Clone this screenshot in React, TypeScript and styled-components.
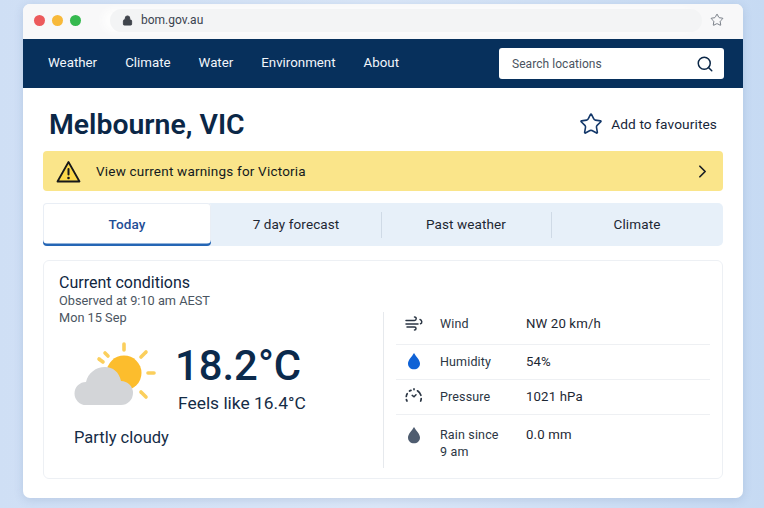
import React from 'react';
import styled, { createGlobalStyle } from 'styled-components';
import { Search, Star, Lock, ChevronRight } from 'lucide-react';

const GlobalStyle = createGlobalStyle`
  html, body {
    margin: 0;
    padding: 0;
    height: 100%;
  }
  body {
    font-family: Roboto, "Liberation Sans", sans-serif;
    background: linear-gradient(90deg, #cfdff5 0%, #dbe7f8 50%, #c6daf3 100%);
    overflow: hidden;
  }
`;

const Stage = styled.div`
  width: 764px;
  height: 508px;
  box-sizing: border-box;
  padding: 4px 21px 10px 23px;
`;

const BrowserWindow = styled.div`
  height: 494px;
  background: #fff;
  border-radius: 7px;
  overflow: hidden;
  display: flex;
  flex-direction: column;
  box-shadow: 0 2px 10px rgba(70, 100, 150, 0.18);
`;

const Chrome = styled.div`
  height: 35px;
  flex: none;
  box-sizing: border-box;
  display: flex;
  align-items: center;
  background: #f8f8f9;
  padding: 0 11px 3px;
`;

const Dot = styled.span<{ $color: string }>`
  width: 11px;
  height: 11px;
  border-radius: 50%;
  background: ${(p) => p.$color};
  margin-right: 7px;
`;

const AddressBar = styled.div`
  margin-left: 22px;
  width: 592px;
  height: 23px;
  flex: none;
  display: flex;
  align-items: center;
  gap: 8px;
  padding-left: 12px;
  box-sizing: border-box;
  background: #f3f4f5;
  border-radius: 12px;
  box-shadow: -8px 0 6px #fdfdfd;
  color: #3b4350;
  font-size: 12px;
`;

const ChromeStar = styled.span`
  margin-left: 8px;
  display: flex;
  color: #5d6570;
`;

const Nav = styled.nav`
  height: 49px;
  flex: none;
  display: flex;
  align-items: center;
  background: #07305c;
  padding: 0 19px 0 25px;
`;

const NavLinks = styled.div`
  display: flex;
  gap: 28px;
  flex: 1;
  margin-bottom: 2px;
`;

const NavLink = styled.a`
  color: #f2f6fb;
  font-size: 13.3px;
`;

const SearchBox = styled.div`
  width: 225px;
  height: 31px;
  box-sizing: border-box;
  background: #fff;
  border-radius: 3px;
  display: flex;
  align-items: center;
  justify-content: space-between;
  padding: 0 10px 0 13px;
  color: #4a5360;
  font-size: 12px;
  letter-spacing: 0.05px;
`;

const Content = styled.main`
  flex: 1;
  display: flex;
  flex-direction: column;
  padding: 0 20px;
`;

const TitleRow = styled.div`
  height: 63px;
  flex: none;
  box-sizing: border-box;
  display: flex;
  align-items: center;
  justify-content: space-between;
  padding: 10px 6px 0;
`;

const Title = styled.h1`
  margin: 0;
  font-size: 28.4px;
  font-weight: 600;
  color: #0b2747;
`;

const Favourite = styled.div`
  display: flex;
  align-items: center;
  gap: 8px;
  margin-bottom: 1px;
  color: #17263a;
  font-size: 13.7px;
  letter-spacing: 0.1px;
`;

const WarningBar = styled.div`
  height: 40px;
  flex: none;
  box-sizing: border-box;
  display: flex;
  align-items: center;
  background: #fae58a;
  border-radius: 4px;
  padding: 0 10px 0 13px;
  color: #141a20;
  font-size: 13.5px;
  letter-spacing: 0.2px;
`;

const WarningText = styled.span`
  flex: 1;
  margin-left: 15px;
`;

const Tabs = styled.div`
  margin-top: 12px;
  height: 43px;
  flex: none;
  display: grid;
  grid-template-columns: 168px 170px 170px 1fr;
  background: #e7f0f9;
  border-radius: 5px;
`;

const Tab = styled.div<{ $active?: boolean }>`
  position: relative;
  display: flex;
  align-items: center;
  justify-content: center;
  padding-bottom: 2px;
  box-sizing: border-box;
  font-size: 13.5px;
  letter-spacing: 0.1px;
  color: ${(p) => (p.$active ? '#1f4e96' : '#1d2733')};
  font-weight: ${(p) => (p.$active ? 500 : 400)};
  background: ${(p) => (p.$active ? '#fff' : 'transparent')};
  border-radius: ${(p) => (p.$active ? '4px' : '0')};
  box-shadow: ${(p) => (p.$active ? 'inset 0 -2.5px 0 #2566b5, inset 0 0 0 1px #e9eef5' : 'none')};
`;

const TabDivider = styled.span`
  position: absolute;
  right: -1px;
  top: 9px;
  bottom: 8px;
  width: 1px;
  background: #cfdae6;
`;

const Card = styled.section`
  margin-top: 14px;
  height: 219px;
  flex: none;
  box-sizing: border-box;
  display: grid;
  grid-template-columns: 324px 1fr;
  border: 1px solid #edf0f4;
  border-radius: 6px;
  padding: 13px 12px 10px 15px;
`;

const LeftPane = styled.div`
  display: flex;
  flex-direction: column;
`;

const CardTitle = styled.h2`
  margin: 0;
  font-size: 16px;
  font-weight: 400;
  line-height: 18px;
  color: #10263f;
`;

const Observed = styled.div`
  margin-top: 1px;
  color: #4b5561;
  font-size: 12.75px;
  line-height: 16.5px;
`;

const Reading = styled.div`
  margin-top: 14px;
  display: flex;
  align-items: flex-start;
  padding-left: 15px;
`;

const WeatherIcon = styled.svg`
  width: 84px;
  height: 66px;
  flex: none;
`;

const Temps = styled.div`
  margin-left: 17px;
  display: flex;
  flex-direction: column;
`;

const Temperature = styled.div`
  font-size: 41.8px;
  font-weight: 500;
  line-height: 52px;
  color: #0b2a4c;
`;

const FeelsLike = styled.div`
  margin-top: 1px;
  margin-left: 3px;
  font-size: 17.4px;
  line-height: 20px;
  color: #152c46;
`;

const Condition = styled.div`
  margin-top: 15px;
  margin-left: 15px;
  font-size: 16.5px;
  line-height: 20px;
  color: #152c46;
`;

const RightPane = styled.div`
  margin-top: 38px;
  border-left: 1px solid #e6e9ed;
  padding-left: 12px;
  display: flex;
  flex-direction: column;
`;

const Stat = styled.div<{ $height: number; $top?: number; $bottom?: number; $last?: boolean }>`
  height: ${(p) => p.$height}px;
  flex: none;
  display: grid;
  grid-template-columns: 44px 86px 1fr;
  align-items: ${(p) => (p.$last ? 'start' : 'center')};
  padding: ${(p) => p.$top ?? 0}px 0 ${(p) => p.$bottom ?? 0}px;
  box-sizing: border-box;
  border-bottom: ${(p) => (p.$last ? 'none' : '1px solid #eef0f3')};
  font-size: 12.5px;
  line-height: 17px;
  letter-spacing: 0.15px;
  color: #2b3644;
`;

const StatIcon = styled.span`
  display: flex;
  padding-left: 9px;
`;

const StatValue = styled.span`
  font-size: 13.2px;
  color: #1d2733;
`;

const WarningIcon = () => (
  <svg width="25" height="23" viewBox="0 0 25 23">
    <path d="M12.5 2 L23.5 21.5 H1.5 Z" fill="#fbd84a" stroke="#17181a" strokeWidth="1.8" strokeLinejoin="round" />
    <rect x="11.5" y="8" width="2" height="7.5" rx="1" fill="#17181a" />
    <circle cx="12.5" cy="18" r="1.3" fill="#17181a" />
  </svg>
);

const SunCloud = () => (
  <WeatherIcon viewBox="0 0 84 66">
    <g stroke="#fbcf5c" strokeWidth="3.6" strokeLinecap="round" fill="none">
      <line x1="50" y1="4" x2="50" y2="10" />
      <line x1="72" y1="12" x2="67" y2="17" />
      <line x1="80" y1="33" x2="74" y2="33" />
      <line x1="72" y1="57" x2="67" y2="52" />
      <line x1="31" y1="13" x2="34" y2="16" />
      <line x1="25" y1="19" x2="29" y2="22" />
    </g>
    <circle cx="50" cy="33" r="17.5" fill="#fcbd2d" />
    <path
      d="M12 65 A11.500 11.500 0 0 1 12 42 C14 33 22 27 31 27 C39 27 45 32 47 41 A12 12 0 0 1 47 65 Z"
      fill="#d3d5d8"
    />
  </WeatherIcon>
);

const WindIcon = () => (
  <svg width="18" height="16" viewBox="0 0 18 16" fill="none" stroke="#2b3644" strokeWidth="1.5" strokeLinecap="round">
    <path d="M1 5.500 H9.500 C11.500 5.500 12 2 9.500 2" />
    <path d="M1 9 H13" />
    <path d="M15 4.500 C17 5 17.500 8 15.500 8.800" />
    <path d="M2 12 H9.500 C11.500 12 11.500 15 9.500 15" />
  </svg>
);

const Drop = ({ color }: { color: string }) => (
  <svg width="14" height="18" viewBox="0 0 14 18" style={{ marginLeft: 2 }}>
    <path d="M7 1 C9 4.500 13 8 13 11.500 C13 15 10.300 17.300 7 17.300 C3.700 17.300 1 15 1 11.500 C1 8 5 4.500 7 1 Z" fill={color} />
  </svg>
);

const PressureIcon = () => (
  <svg width="18" height="16" viewBox="0 0 18 16" fill="none" stroke="#2b3644" strokeWidth="1.7" strokeLinecap="round">
    <path d="M2 13 C1.700 12.500 1.500 12 1.400 11.500" />
    <path d="M1.300 8.500 C1.400 7.500 1.700 6.500 2.200 5.700" />
    <path d="M4.500 3 C5 2.700 5.500 2.500 6 2.400" />
    <path d="M9 0.900 V1.600" />
    <path d="M12.500 2.800 C14 3.800 15.300 5.500 15.900 7.300" />
    <path d="M16.200 10.500 C16.200 11.500 16 12.300 15.700 13" />
    <path d="M7.200 7.400 L9 8.800 L11 6.800" strokeWidth="1.500" />
  </svg>
);

const navItems = ['Weather', 'Climate', 'Water', 'Environment', 'About'];
const tabs = ['Today', '7 day forecast', 'Past weather', 'Climate'];

export default function App() {
  return (
    <Stage>
      <GlobalStyle />
      <BrowserWindow>
        <Chrome>
          <Dot $color="#ec5a5c" />
          <Dot $color="#f8b93a" />
          <Dot $color="#35b94f" />
          <AddressBar>
            <Lock size={11} color="#3f444c" fill="#3f444c" />
            bom.gov.au
          </AddressBar>
          <ChromeStar>
            <Star size={14} strokeWidth={1.4} />
          </ChromeStar>
        </Chrome>
        <Nav>
          <NavLinks>
            {navItems.map((item) => (
              <NavLink key={item}>{item}</NavLink>
            ))}
          </NavLinks>
          <SearchBox>
            Search locations
            <Search size={18} color="#0b2747" strokeWidth={2} />
          </SearchBox>
        </Nav>
        <Content>
          <TitleRow>
            <Title>Melbourne, VIC</Title>
            <Favourite>
              <Star size={24} color="#14386a" strokeWidth={1.6} />
              Add to favourites
            </Favourite>
          </TitleRow>
          <WarningBar>
            <WarningIcon />
            <WarningText>View current warnings for Victoria</WarningText>
            <ChevronRight size={21} color="#1b2026" strokeWidth={2} />
          </WarningBar>
          <Tabs>
            {tabs.map((tab, i) => (
              <Tab key={tab} $active={i === 0}>
                {tab}
                {(i === 1 || i === 2) && <TabDivider />}
              </Tab>
            ))}
          </Tabs>
          <Card>
            <LeftPane>
              <CardTitle>Current conditions</CardTitle>
              <Observed>
                Observed at 9:10 am AEST
                <br />
                Mon 15 Sep
              </Observed>
              <Reading>
                <SunCloud />
                <Temps>
                  <Temperature>18.2°C</Temperature>
                  <FeelsLike>Feels like 16.4°C</FeelsLike>
                </Temps>
              </Reading>
              <Condition>Partly cloudy</Condition>
            </LeftPane>
            <RightPane>
              <Stat $height={33} $bottom={10}>
                <StatIcon>
                  <WindIcon />
                </StatIcon>
                <span>Wind</span>
                <StatValue>NW 20 km/h</StatValue>
              </Stat>
              <Stat $height={35} $bottom={2}>
                <StatIcon>
                  <Drop color="#0f62d6" />
                </StatIcon>
                <span>Humidity</span>
                <StatValue>54%</StatValue>
              </Stat>
              <Stat $height={35} $bottom={2}>
                <StatIcon>
                  <PressureIcon />
                </StatIcon>
                <span>Pressure</span>
                <StatValue>1021 hPa</StatValue>
              </Stat>
              <Stat $height={53} $top={11} $last>
                <StatIcon>
                  <Drop color="#4f5d70" />
                </StatIcon>
                <span>
                  Rain since
                  <br />9 am
                </span>
                <StatValue>0.0 mm</StatValue>
              </Stat>
            </RightPane>
          </Card>
        </Content>
      </BrowserWindow>
    </Stage>
  );
}
